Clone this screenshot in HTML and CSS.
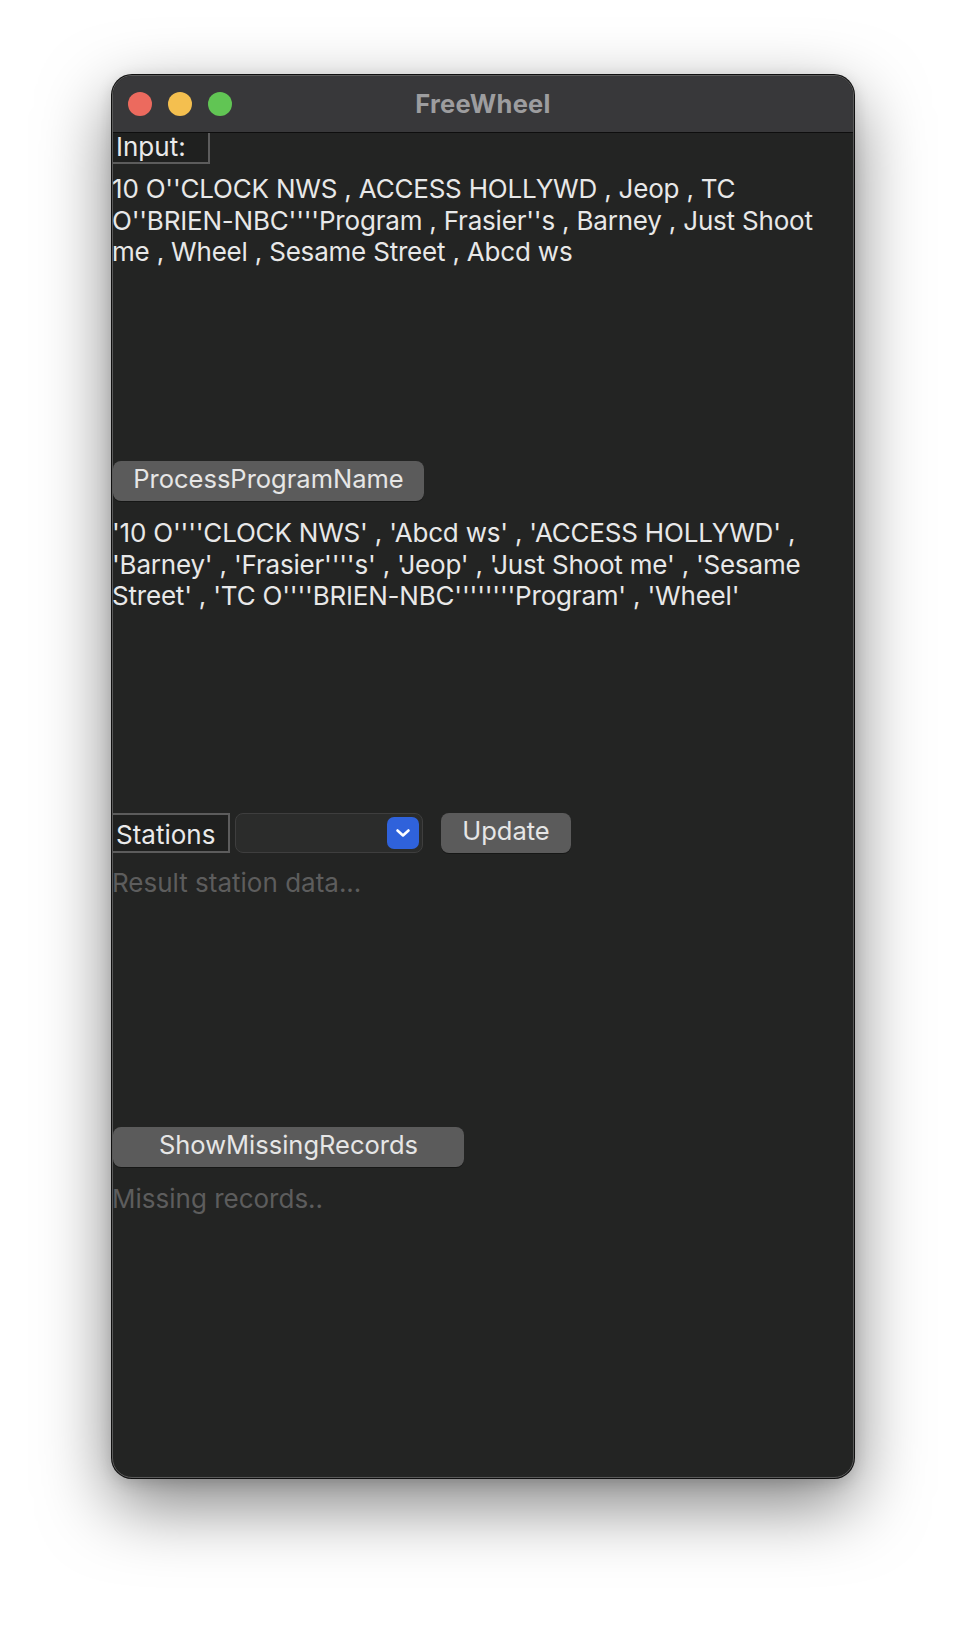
FILE: index.html
```html
<!DOCTYPE html>
<html>
<head>
<meta charset="utf-8">
<link rel="stylesheet" href="styles.css">
</head>
<body>
<div class="window">
  <div class="titlebar">
    <div class="lights">
      <span class="light red"></span>
      <span class="light yellow"></span>
      <span class="light green"></span>
    </div>
    <div class="title">FreeWheel</div>
  </div>
  <div class="content">
    <div class="label input-label">Input:</div>
    <div class="textblock input-text">10 O''CLOCK NWS , ACCESS HOLLYWD , Jeop , TC<br>O''BRIEN-NBC''''Program , Frasier''s , Barney , Just Shoot<br>me , Wheel , Sesame Street , Abcd ws</div>
    <button class="btn btn-process">ProcessProgramName</button>
    <div class="textblock output-text">'10 O''''CLOCK NWS' , 'Abcd ws' , 'ACCESS HOLLYWD' ,<br>'Barney' , 'Frasier''''s' , 'Jeop' , 'Just Shoot me' , 'Sesame<br>Street' , 'TC O''''BRIEN-NBC''''''''Program' , 'Wheel'</div>
    <div class="stations-row">
      <div class="label stations-label">Stations</div>
      <div class="select">
        <span class="chevron">
          <svg width="16" height="12" viewBox="0 0 16 12"><path d="M2.5 3.5 L8 8.5 L13.5 3.5" fill="none" stroke="#fff" stroke-width="2.6" stroke-linecap="round" stroke-linejoin="round"/></svg>
        </span>
      </div>
      <button class="btn btn-update">Update</button>
    </div>
    <div class="textblock placeholder result-text">Result station data...</div>
    <button class="btn btn-missing">ShowMissingRecords</button>
    <div class="textblock placeholder missing-text">Missing records..</div>
  </div>
</div>
</body>
</html>
```
FILE: styles.css
```css
html, body {
  margin: 0;
  padding: 0;
  background: #ffffff;
}
body {
  width: 966px;
  height: 1626px;
  overflow: hidden;
  font-family: Inter, "Liberation Sans", sans-serif;
}
.window {
  margin-left: 112px;
  margin-top: 75px;
  width: 742px;
  height: 1403px;
  box-sizing: border-box;
  border-radius: 20px;
  background: #232423;
  border: 1px solid #5a5a5a;
  box-shadow: 0 0 0 1px #101010, 0 26px 70px rgba(0, 0, 0, 0.5), 0 4px 16px rgba(0,0,0,0.15);
  overflow: hidden;
  display: flex;
  flex-direction: column;
}
.titlebar {
  height: 56px;
  flex: none;
  background: #38383a;
  border-bottom: 1px solid #0e0e0e;
  display: flex;
  align-items: center;
  position: relative;
}
.lights {
  display: flex;
  gap: 16px;
  padding-left: 15px;
}
.light {
  width: 24px;
  height: 24px;
  border-radius: 50%;
  display: block;
}
.red { background: #ec6a5e; }
.yellow { background: #f4bf4f; }
.green { background: #61c554; }
.title {
  position: absolute;
  left: 0;
  right: 0;
  top: 0;
  bottom: 0;
  display: flex;
  align-items: center;
  justify-content: center;
  color: #9d9d9f;
  font-weight: 700;
  font-size: 25.5px;
  letter-spacing: 0.3px;
  padding-bottom: 2px;
}
.content {
  display: flex;
  flex-direction: column;
  align-items: flex-start;
  color: #e8e8e8;
  font-size: 26px;
}
.label {
  box-sizing: border-box;
  border-right: 2px solid #5c5c5c;
  border-bottom: 2px solid #5c5c5c;
  background: #1f201f;
  color: #eaeaea;
  padding-left: 3px;
  font-size: 26px;
}
.input-label {
  width: 97px;
  height: 31px;
  line-height: 28px;
}
.textblock {
  line-height: 31.5px;
  letter-spacing: -0.2px;
  white-space: nowrap;
  margin-left: -1px;
}
.input-text {
  margin-top: 9px;
  height: 288px;
}
.btn {
  box-sizing: border-box;
  font-family: Inter, "Liberation Sans", sans-serif;
  font-size: 25.5px;
  color: #e6e6e6;
  background: #5b5b5b;
  border: none;
  border-radius: 8px;
  height: 40px;
  padding: 0 0 6px 0;
  box-shadow: 0 1px 0 rgba(0,0,0,0.35);
}
.btn-process {
  width: 311px;
}
.output-text {
  margin-top: 16px;
  height: 296px;
}
.stations-row {
  display: flex;
  align-items: center;
  height: 40px;
}
.stations-label {
  width: 117px;
  height: 40px;
  line-height: 40px;
  border: 2px solid #5c5c5c;
  border-left: none;
  padding-left: 3px;
}
.select {
  margin-left: 5px;
  width: 188px;
  height: 40px;
  box-sizing: border-box;
  border: 1px solid #3e3e3e;
  border-radius: 8px;
  background: #2b2c2b;
  display: flex;
  align-items: center;
  justify-content: flex-end;
  padding-right: 3px;
}
.chevron {
  width: 32px;
  height: 32px;
  border-radius: 7px;
  background: #2f62db;
  display: flex;
  align-items: center;
  justify-content: center;
}
.btn-update {
  margin-left: 18px;
  width: 130px;
}
.placeholder {
  color: #5d5d5d;
  letter-spacing: 0;
}
.result-text {
  margin-top: 14px;
  height: 260px;
}
.btn-missing {
  width: 351px;
}
.missing-text {
  margin-top: 16px;
}
```
